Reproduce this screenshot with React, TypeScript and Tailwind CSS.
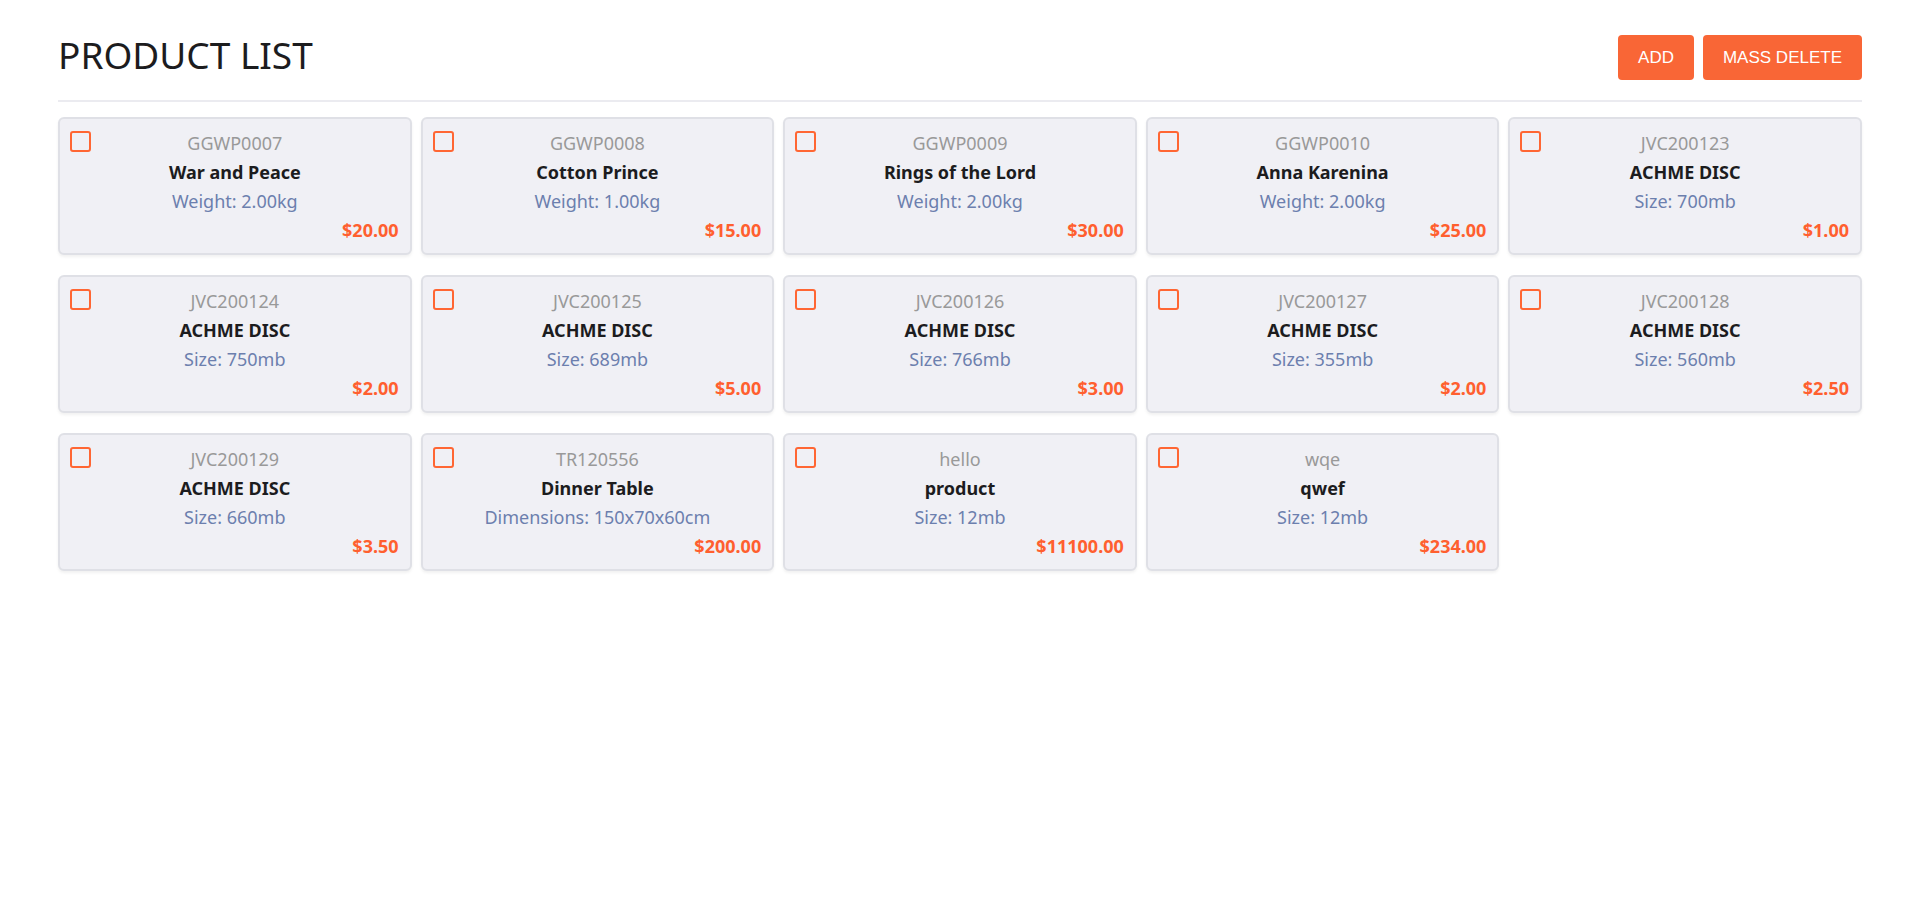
import React from "react";

type P = { sku: string; name: string; attr: string; price: string };

const products: P[] = [
  { sku: "GGWP0007", name: "War and Peace", attr: "Weight: 2.00kg", price: "$20.00" },
  { sku: "GGWP0008", name: "Cotton Prince", attr: "Weight: 1.00kg", price: "$15.00" },
  { sku: "GGWP0009", name: "Rings of the Lord", attr: "Weight: 2.00kg", price: "$30.00" },
  { sku: "GGWP0010", name: "Anna Karenina", attr: "Weight: 2.00kg", price: "$25.00" },
  { sku: "JVC200123", name: "ACHME DISC", attr: "Size: 700mb", price: "$1.00" },
  { sku: "JVC200124", name: "ACHME DISC", attr: "Size: 750mb", price: "$2.00" },
  { sku: "JVC200125", name: "ACHME DISC", attr: "Size: 689mb", price: "$5.00" },
  { sku: "JVC200126", name: "ACHME DISC", attr: "Size: 766mb", price: "$3.00" },
  { sku: "JVC200127", name: "ACHME DISC", attr: "Size: 355mb", price: "$2.00" },
  { sku: "JVC200128", name: "ACHME DISC", attr: "Size: 560mb", price: "$2.50" },
  { sku: "JVC200129", name: "ACHME DISC", attr: "Size: 660mb", price: "$3.50" },
  { sku: "TR120556", name: "Dinner Table", attr: "Dimensions: 150x70x60cm", price: "$200.00" },
  { sku: "hello", name: "product", attr: "Size: 12mb", price: "$11100.00" },
  { sku: "wqe", name: "qwef", attr: "Size: 12mb", price: "$234.00" },
];

function Card({ p }: { p: P }) {
  return (
    <div className="relative rounded-[6px] border-2 border-[#dfe0e6] bg-[#f0f0f5] px-[11px] pb-[8px] pt-[10px] shadow-[0_2px_3px_rgba(0,0,0,0.06)]">
      <input
        type="checkbox"
        className="absolute left-[10px] top-[12px] m-0 h-[21px] w-[21px] appearance-none rounded-[3px] border-[2.5px] border-[#ff6633] bg-transparent"
      />
      <div className="text-center text-[18px] leading-[29px] text-[#999999]">{p.sku}</div>
      <div className="text-center text-[18px] font-bold leading-[29px] text-[#1c1c1e]">{p.name}</div>
      <div className="text-center text-[18px] leading-[29px] text-[#6c7fae]">{p.attr}</div>
      <div className="text-right text-[18px] font-bold leading-[29px] text-[#ff5f2f]">{p.price}</div>
    </div>
  );
}

export default function App() {
  return (
    <div className="min-h-[908px] bg-white px-[58px] font-['Noto_Sans',sans-serif]">
      <header className="flex items-center justify-between pb-[17px] pt-[32px]">
        <h1 className="mb-[6px] text-[37px] font-normal leading-[45px] text-[#1c1c1e]">PRODUCT LIST</h1>
        <div className="flex gap-[9px] font-['Liberation_Sans',Arial,sans-serif]">
          <button className="h-[45px] rounded-[4px] bg-[#f96636] px-[20px] text-[17px] text-white">ADD</button>
          <button className="h-[45px] rounded-[4px] bg-[#f96636] px-[20px] text-[17px] text-white">MASS DELETE</button>
        </div>
      </header>
      <div className="h-[2px] bg-[#ebebf0]" />
      <div className="mt-[15px] grid grid-cols-5 gap-x-[9px] gap-y-[20px]">
        {products.map((p) => (
          <Card key={p.sku} p={p} />
        ))}
      </div>
    </div>
  );
}
